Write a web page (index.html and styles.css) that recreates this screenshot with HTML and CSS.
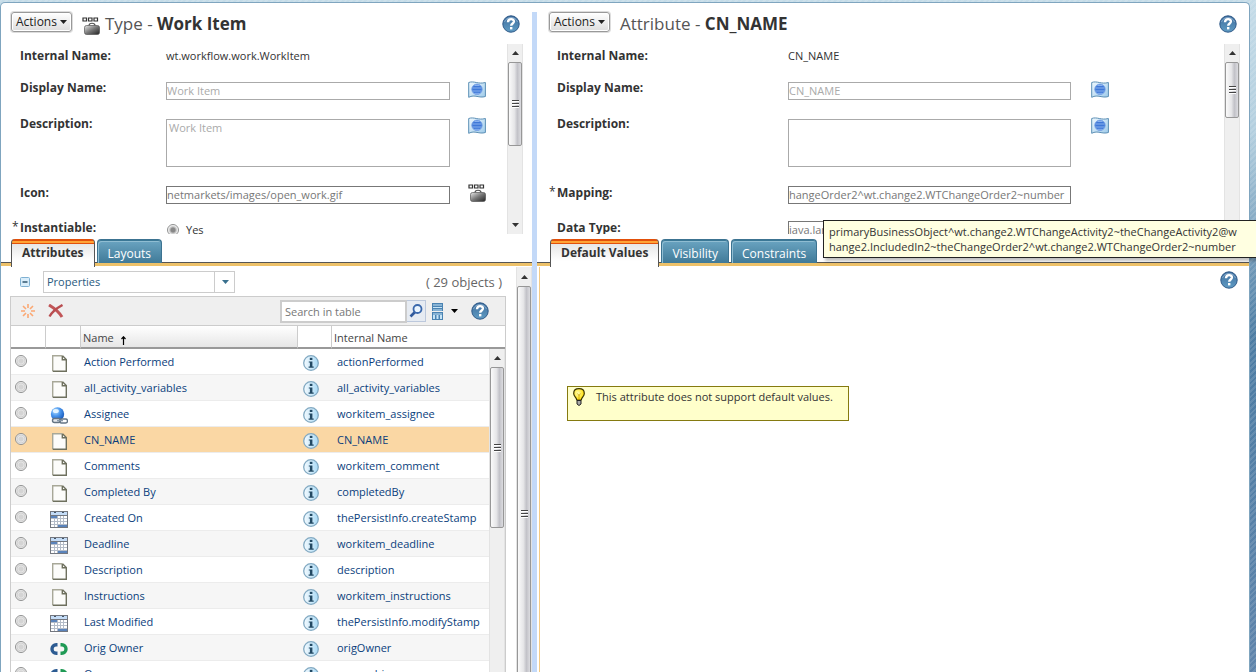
FILE: index.html
```html
<!DOCTYPE html>
<html lang="en">
<head>
<meta charset="utf-8">
<title>Type and Attribute Management</title>
<link rel="stylesheet" href="styles.css">
</head>
<body>
<svg class="defs" width="0" height="0" aria-hidden="true">
  <defs>
    <linearGradient id="g-help" x1="0" y1="0" x2="0" y2="1"><stop offset="0" stop-color="#3f6d9c"/><stop offset="1" stop-color="#5f9cc4"/></linearGradient>
    <linearGradient id="g-flag" x1="0" y1="0" x2="1" y2="1"><stop offset="0" stop-color="#eef8fe"/><stop offset="1" stop-color="#9fcbea"/></linearGradient>
    <linearGradient id="g-case" x1="0" y1="0" x2="1" y2="1"><stop offset="0" stop-color="#e8e8e8"/><stop offset=".5" stop-color="#777"/><stop offset="1" stop-color="#222"/></linearGradient>
    <linearGradient id="g-info" x1="0" y1="0" x2="1" y2="0"><stop offset="0" stop-color="#f5fbff"/><stop offset="1" stop-color="#a9daf6"/></linearGradient>
    <radialGradient id="g-globe" cx=".35" cy=".3" r=".7"><stop offset="0" stop-color="#b8e0ff"/><stop offset=".5" stop-color="#4a97ee"/><stop offset="1" stop-color="#1d5fc0"/></radialGradient>
    <radialGradient id="g-bulb" cx=".4" cy=".4" r=".6"><stop offset="0" stop-color="#ffffb0"/><stop offset="1" stop-color="#ffdc00"/></radialGradient>
  </defs>
  <symbol id="i-help" viewBox="0 0 18 18"><circle cx="9" cy="9" r="8.2" fill="url(#g-help)" stroke="#2f5a89"/><path d="M2.500 7a7 7 0 0 1 13 0" fill="none" stroke="#83a9cb"/><path d="M6 7.2C6.2 3.200 12.200 3.300 11.900 6.700C11.700 8.500 9.200 8.500 9.200 10.800" fill="none" stroke="#fff" stroke-width="2.400"/><rect x="8" y="12" width="2.400" height="2.400" fill="#fff"/></symbol>
  <symbol id="i-flag" viewBox="0 0 18 17"><path d="M.7 1.500C6-.5 10 3.500 17.400 1.500V15.500C11 17.500 7 13 .7 16.300Z" fill="url(#g-flag)" stroke="#5b8fb5"/><circle cx="9" cy="8.300" r="5.200" fill="#3f78d8" stroke="#7fa8e8"/><path d="M5 7H13M5 10H13M6.500 12.300H11.500M6.500 4.500H11.500" stroke="#9cc0f5" stroke-width=".8"/></symbol>
  <symbol id="i-work" viewBox="0 0 18 18"><path d="M1 1h3.500v3H1zM6.500 1H10v3H6.500zM12 1h3.500v3H12z" fill="#fff" stroke="#333" stroke-width="1.200"/><path d="M7 8.500C7 5.500 13 5.500 13 8.500" fill="none" stroke="#555" stroke-width="1.200"/><rect x="2.500" y="8.500" width="15" height="9" rx="2" fill="url(#g-case)" stroke="#555" stroke-width=".7"/></symbol>
  <symbol id="i-page" viewBox="0 0 15 17"><path d="M.7.7H10.500L14.300 4.500V16.300H.7Z" fill="#fcfcfa"/><path d="M.7 16V.7H10.500" fill="none" stroke="#a8a898" stroke-width="1.400"/><path d="M10.500.7L14.300 4.500V16.300H.7M10.300 1V4.800H14" fill="none" stroke="#6e705e" stroke-width="1.400"/></symbol>
  <symbol id="i-cal" viewBox="0 0 18 17"><rect width="18" height="17" fill="#73777f"/><rect x="1" y="1" width="16" height="3" fill="#c4dcf7"/><path d="M4 1.500h2M12 1.500h2" stroke="#456"/><path d="M1 5h16v11H1z" fill="#b4bcc8"/><path d="M8 5h2v2H8zM11 5h2v2h-2zM14 5h3v2h-3zM1 8h3v2H1zM5 8h2v2H5zM8 8h2v2H8zM11 8h2v2h-2zM14 8h3v2h-3zM1 11h3v2H1zM5 11h2v2H5zM8 11h2v2H8zM11 11h2v2h-2zM14 11h3v2h-3zM1 14h3v2H1zM5 14h2v2H5z" fill="#fff"/><path d="M1 5h6v2H1zM8 14h9v2H8z" fill="#5a83bb"/></symbol>
  <symbol id="i-globe" viewBox="0 0 18 17"><circle cx="7.500" cy="7" r="6.700" fill="url(#g-globe)"/><ellipse cx="5.800" cy="4" rx="3" ry="2" fill="#e3f4ff"/><rect x="2.500" y="11.500" width="8" height="4" rx="2" fill="#e5e9ee" stroke="#647484" stroke-width="1.400"/><rect x="9.500" y="12" width="8" height="4" rx="2" fill="none" stroke="#647484" stroke-width="1.400"/><path d="M7 13.600h6" stroke="#8898a8" stroke-width="1.400"/></symbol>
  <symbol id="i-owner" viewBox="0 0 18 12"><path d="M7.500 1.800H6.200A4 4 0 0 0 6.200 10.200H7.500" fill="none" stroke="#2c5b92" stroke-width="3.400"/><path d="M10.500 1.800H11.800A4 4 0 0 1 11.800 10.200H10.500" fill="none" stroke="#1f9a55" stroke-width="3.400"/></symbol>
  <symbol id="i-info" viewBox="0 0 16 16"><circle cx="8" cy="8" r="7.300" fill="url(#g-info)" stroke="#82a9c2" stroke-width="1.300"/><rect x="6.800" y="2.800" width="2.600" height="2.200" fill="#234a64"/><path d="M5.800 6.500H9.400V11.500H10.700V12.700H5.600V11.500H6.900V7.600H5.800Z" fill="#234a64"/></symbol>
  <symbol id="i-up" viewBox="0 0 7 4"><path d="M0 4L3.500 0L7 4Z" fill="#333"/></symbol>
  <symbol id="i-down" viewBox="0 0 7 4"><path d="M0 0L3.500 4L7 0Z" fill="currentColor"/></symbol>
</svg>

<main class="frame">
  <section class="pane pane-type">
    <header class="pane-head">
      <button class="actions" type="button">Actions<svg width="7" height="4"><use href="#i-down"/></svg></button>
      <svg class="head-icon" width="18" height="18"><use href="#i-work"/></svg>
      <h1>Type - <b>Work Item</b></h1>
      <button class="icon-btn help" type="button" aria-label="Help"><svg width="18" height="18"><use href="#i-help"/></svg></button>
    </header>
    <div class="scroller">
      <form class="fields fields-type">
        <span></span><b>Internal Name:</b><span class="plain">wt.workflow.work.WorkItem</span><span></span>
        <span></span><label for="t-name">Display Name:</label><input id="t-name" type="text" value="Work Item" disabled><button class="icon-btn flag" type="button" aria-label="Translate name"><svg width="18" height="17"><use href="#i-flag"/></svg></button>
        <span></span><label for="t-desc">Description:</label><textarea id="t-desc" disabled>Work Item</textarea><button class="icon-btn flag" type="button" aria-label="Translate description"><svg width="18" height="17"><use href="#i-flag"/></svg></button>
        <span></span><label for="t-icon">Icon:</label><input id="t-icon" class="strong" type="text" value="netmarkets/images/open_work.gif" readonly><svg class="type-icon" width="18" height="18"><use href="#i-work"/></svg>
        <span class="star">*</span><b>Instantiable:</b><label class="choice"><input type="radio" name="inst" checked>Yes</label><span></span>
      </form>
      <div class="scrollbar"><span class="arrow"><svg width="7" height="4"><use href="#i-up"/></svg></span><span class="thumb thumb-type"><i></i></span><span class="arrow end"><svg width="7" height="4"><use href="#i-down"/></svg></span></div>
    </div>
    <nav class="tabs"><button class="tab active" type="button">Attributes</button><button class="tab" type="button">Layouts</button></nav>
    <div class="lower">
      <div class="list">
        <div class="view-row">
          <button class="collapse" type="button" aria-label="Collapse"><svg width="10" height="10"><rect x=".5" y=".5" width="9" height="9" rx="1" fill="#d9edfa" stroke="#7fb0d2"/><path d="M2.500 5h5" stroke="#234a64" stroke-width="1.400"/></svg></button>
          <span class="select"><select aria-label="View"><option>Properties</option></select><span class="select-arrow"><svg width="7" height="4"><use href="#i-down"/></svg></span></span>
          <span class="count">( 29 objects )</span>
        </div>
        <div class="grid-box">
          <div class="toolbar">
            <button class="icon-btn" type="button" aria-label="New"><svg width="14" height="14" viewBox="0 0 14 14"><path d="M7 0v4M7 10v4M0 7h4M10 7h4M2 2l3 3M9 9l3 3M12 2L9 5M5 9l-3 3" stroke="#fba873" stroke-width="1.600"/></svg></button>
            <button class="icon-btn" type="button" aria-label="Delete"><svg width="16" height="14" viewBox="0 0 16 14"><path d="M1 1C6 4 11 8 14 13" fill="none" stroke="#c15557" stroke-width="3"/><path d="M14.500 1C9 4 4 8 1.500 12.500" fill="none" stroke="#b94d50" stroke-width="2.400"/></svg></button>
            <div class="search"><input type="text" aria-label="Search in table" placeholder="Search in table"><button type="button" aria-label="Search"><svg width="14" height="14" viewBox="0 0 14 14"><path d="M6 8L1.500 12.500" stroke="#315a9c" stroke-width="2.600"/><circle cx="8.500" cy="5" r="4" fill="#eaf5ff" stroke="#3a68ac" stroke-width="1.800"/></svg></button></div>
            <button class="icon-btn views" type="button" aria-label="Table views"><svg width="11" height="17" viewBox="0 0 11 17"><path d="M0 0h11v8H0zM0 9h11v8H0z" fill="#4a83b2"/><path d="M1 2h9M1 4.500h9M1 7h9M1 11h9" stroke="#c6e4f6" stroke-width="1.200"/><path d="M2 12v4M5.500 12v4M9 12v4" stroke="#c6e4f6" stroke-width="2"/></svg><svg width="7" height="4"><use href="#i-down"/></svg></button>
            <button class="icon-btn" type="button" aria-label="Help"><svg width="18" height="18"><use href="#i-help"/></svg></button>
          </div>
          <table>
            <colgroup><col class="c-radio"><col class="c-icon"><col><col class="c-info"><col class="c-internal"></colgroup>
            <thead><tr><th></th><th></th><th class="sorted">Name <svg width="5" height="9" viewBox="0 0 5 9"><path d="M2.500 9V1M.5 3L2.500.8L4.500 3" fill="none" stroke="#000" stroke-width="1.200"/></svg></th><th></th><th>Internal Name</th></tr></thead>
            <tbody>
              <tr><td><input type="radio" name="row" aria-label="Action Performed"></td><td><svg width="15" height="17"><use href="#i-page"/></svg></td><td>Action Performed</td><td><svg width="16" height="16"><use href="#i-info"/></svg></td><td>actionPerformed</td></tr>
              <tr><td><input type="radio" name="row" aria-label="all_activity_variables"></td><td><svg width="15" height="17"><use href="#i-page"/></svg></td><td>all_activity_variables</td><td><svg width="16" height="16"><use href="#i-info"/></svg></td><td>all_activity_variables</td></tr>
              <tr><td><input type="radio" name="row" aria-label="Assignee"></td><td><svg width="18" height="17"><use href="#i-globe"/></svg></td><td>Assignee</td><td><svg width="16" height="16"><use href="#i-info"/></svg></td><td>workitem_assignee</td></tr>
              <tr class="selected"><td><input type="radio" name="row" aria-label="CN_NAME"></td><td><svg width="15" height="17"><use href="#i-page"/></svg></td><td>CN_NAME</td><td><svg width="16" height="16"><use href="#i-info"/></svg></td><td>CN_NAME</td></tr>
              <tr><td><input type="radio" name="row" aria-label="Comments"></td><td><svg width="15" height="17"><use href="#i-page"/></svg></td><td>Comments</td><td><svg width="16" height="16"><use href="#i-info"/></svg></td><td>workitem_comment</td></tr>
              <tr><td><input type="radio" name="row" aria-label="Completed By"></td><td><svg width="15" height="17"><use href="#i-page"/></svg></td><td>Completed By</td><td><svg width="16" height="16"><use href="#i-info"/></svg></td><td>completedBy</td></tr>
              <tr><td><input type="radio" name="row" aria-label="Created On"></td><td><svg width="18" height="17"><use href="#i-cal"/></svg></td><td>Created On</td><td><svg width="16" height="16"><use href="#i-info"/></svg></td><td>thePersistInfo.createStamp</td></tr>
              <tr><td><input type="radio" name="row" aria-label="Deadline"></td><td><svg width="18" height="17"><use href="#i-cal"/></svg></td><td>Deadline</td><td><svg width="16" height="16"><use href="#i-info"/></svg></td><td>workitem_deadline</td></tr>
              <tr><td><input type="radio" name="row" aria-label="Description"></td><td><svg width="15" height="17"><use href="#i-page"/></svg></td><td>Description</td><td><svg width="16" height="16"><use href="#i-info"/></svg></td><td>description</td></tr>
              <tr><td><input type="radio" name="row" aria-label="Instructions"></td><td><svg width="15" height="17"><use href="#i-page"/></svg></td><td>Instructions</td><td><svg width="16" height="16"><use href="#i-info"/></svg></td><td>workitem_instructions</td></tr>
              <tr><td><input type="radio" name="row" aria-label="Last Modified"></td><td><svg width="18" height="17"><use href="#i-cal"/></svg></td><td>Last Modified</td><td><svg width="16" height="16"><use href="#i-info"/></svg></td><td>thePersistInfo.modifyStamp</td></tr>
              <tr><td><input type="radio" name="row" aria-label="Orig Owner"></td><td><svg width="18" height="12"><use href="#i-owner"/></svg></td><td>Orig Owner</td><td><svg width="16" height="16"><use href="#i-info"/></svg></td><td>origOwner</td></tr>
              <tr><td><input type="radio" name="row" aria-label="Owner"></td><td><svg width="18" height="12"><use href="#i-owner"/></svg></td><td>Owner</td><td><svg width="16" height="16"><use href="#i-info"/></svg></td><td>ownership</td></tr>
            </tbody>
          </table>
          <div class="scrollbar table-bar"><span class="arrow"><svg width="7" height="4"><use href="#i-up"/></svg></span><span class="thumb thumb-table"><i></i></span></div>
        </div>
      </div>
      <div class="scrollbar"><span class="arrow"><svg width="7" height="4"><use href="#i-up"/></svg></span><span class="thumb thumb-list"><i></i></span></div>
    </div>
  </section>

  <div class="divider"></div>

  <section class="pane pane-attr">
    <header class="pane-head">
      <button class="actions" type="button">Actions<svg width="7" height="4"><use href="#i-down"/></svg></button>
      <h1>Attribute - <b>CN_NAME</b></h1>
      <button class="icon-btn help" type="button" aria-label="Help"><svg width="18" height="18"><use href="#i-help"/></svg></button>
    </header>
    <div class="scroller">
      <form class="fields fields-attr">
        <span></span><b>Internal Name:</b><span class="plain">CN_NAME</span><span></span>
        <span></span><label for="a-name">Display Name:</label><input id="a-name" type="text" value="CN_NAME" disabled><button class="icon-btn flag" type="button" aria-label="Translate name"><svg width="18" height="17"><use href="#i-flag"/></svg></button>
        <span></span><label for="a-desc">Description:</label><textarea id="a-desc" disabled></textarea><button class="icon-btn flag" type="button" aria-label="Translate description"><svg width="18" height="17"><use href="#i-flag"/></svg></button>
        <span class="star">*</span><label for="a-map">Mapping:</label><input id="a-map" class="strong" type="text" value="hangeOrder2^wt.change2.WTChangeOrder2~number" readonly><span></span>
        <span></span><label for="a-type">Data Type:</label><input id="a-type" class="strong" type="text" value="java.lang.String" readonly><span></span>
      </form>
      <div class="scrollbar"><span class="arrow"><svg width="7" height="4"><use href="#i-up"/></svg></span><span class="thumb thumb-attr"><i></i></span></div>
    </div>
    <nav class="tabs"><button class="tab active" type="button">Default Values</button><button class="tab" type="button">Visibility</button><button class="tab" type="button">Constraints</button></nav>
    <div class="values">
      <button class="icon-btn help" type="button" aria-label="Help"><svg width="18" height="18"><use href="#i-help"/></svg></button>
      <p class="notice"><svg width="12" height="18" viewBox="0 0 12 18"><path d="M6 .7C2.500.7.700 3 .7 5.500C.7 8.500 3.500 9 3.700 12H8.300C8.500 9 11.300 8.500 11.300 5.500C11.300 3 9.500.7 6 .7Z" fill="url(#g-bulb)" stroke="#3a3500" stroke-width="1.200"/><path d="M6 12V7M4.500 5.500L6 7.500L7.500 5.500" fill="none" stroke="#c8a000" stroke-width=".7"/><path d="M4 12.500h4v3.500L6 17.500L4 16Z" fill="#aaa" stroke="#222"/></svg>This attribute does not support default values.</p>
    </div>
  </section>
</main>

<div class="tooltip" role="tooltip">primaryBusinessObject^wt.change2.WTChangeActivity2~theChangeActivity2@w<br>hange2.IncludedIn2~theChangeOrder2^wt.change2.WTChangeOrder2~number</div>
</body>
</html>
```
FILE: styles.css
```css
* { box-sizing: border-box; }

html, body { height: 100%; }

body {
  margin: 0;
  padding: 2px 6px 0 0;
  overflow: hidden;
  position: relative;
  font: 11px/18px "Open Sans", "Noto Sans", sans-serif;
  color: #333;
  background:
    repeating-linear-gradient(135deg, rgba(255, 255, 255, .12) 0 2px, transparent 2px 4px),
    linear-gradient(#c5dce8, #b2cede 20%, #4c7ca3 50%, #5f84ab);
}

input, textarea, select, button { font: inherit; color: inherit; margin: 0; }
button { cursor: pointer; }
svg { display: block; flex: none; }
.defs { position: absolute; }

.frame {
  height: 100%;
  display: grid;
  grid-template-columns: minmax(0, 531fr) 5px minmax(0, 712fr);
  background: #fff;
  border: solid #7fa5bf;
  border-width: 1px 1px 0;
  border-radius: 5px 5px 0 0;
}

.divider { margin-top: 9px; background: #c3d9f8; }

.pane {
  min-width: 0;
  min-height: 0;
  display: grid;
  grid-template-rows: 41px 190px 33px minmax(0, 1fr);
}

.pane-head {
  display: flex;
  align-items: flex-start;
  padding: 9px 12px 0 10px;
}
.pane-attr .pane-head { padding-left: 12px; }

.actions {
  height: 20px;
  display: flex;
  align-items: center;
  gap: 3px;
  padding: 0 4px 1px;
  border: 1px solid #999;
  border-radius: 3px;
  background: linear-gradient(#fff, #ddd);
  box-shadow: inset 0 0 0 1px #fff, 0 0 0 1px #ddd;
  font-size: 12px;
  color: #222;
}
.head-icon { margin: 5px 5px 0 10px; }

h1 {
  margin: 0;
  font-size: 17px;
  line-height: 24px;
  font-weight: 400;
  color: #555;
  white-space: nowrap;
}
h1 b { color: #333; }
.pane-attr h1 { margin-left: 10px; }

.icon-btn { padding: 0; border: 0; background: none; }
.help { margin: 3px 0 0 auto; }

.scroller {
  display: flex;
  overflow: hidden;
  padding-right: 9px;
}

.fields {
  flex: 1;
  min-width: 0;
  display: grid;
  grid-template-rows: 32px 36px 69px 35px auto;
  align-items: start;
  padding: 3px 0 0 11px;
}
.fields-type { grid-template-columns: 8px 146px minmax(0, 1fr) 57px; }
.pane-attr .fields { padding-left: 12px; }
.fields-attr { grid-template-columns: 8px 231px minmax(0, 1fr) 153px; }
.fields > b, .fields > label:not(.choice) { font-size: 12px; font-weight: 700; }
.star { font-size: 12px; line-height: 16px; }
.plain { color: #333; }

.fields input[type="text"], .fields textarea {
  display: block;
  width: 100%;
  height: 18px;
  margin-top: 3px;
  padding: 0 0 1px;
  border: 1px solid #aaa;
  border-radius: 0;
  background: #fff;
  line-height: 16px;
  color: #aaa;
}
.fields textarea { height: 48px; margin-top: 4px; padding: 0 2px; resize: none; }
.fields input[type="text"].strong { margin-top: 2px; border-color: #777; color: #777; }
.flag { margin: 2px 0 0 18px; }
.fields-attr .flag { margin-left: 20px; }
.type-icon { margin-left: 18px; }

.choice { display: flex; align-items: center; gap: 7px; padding-top: 2px; }

input[type="radio"] {
  appearance: none;
  width: 12px;
  height: 12px;
  border: 1px solid #8e8f8f;
  border-radius: 50%;
  background: radial-gradient(circle, #d4d4d4 0 2px, #e6e6e6 3px, #ccc 4px, #fff 5px);
}
.choice input:checked { margin-left: 1px; background: radial-gradient(circle, #888 0 2px, #bbb 3px, #fff 5px); }

.scrollbar {
  flex: none;
  width: 16px;
  display: flex;
  flex-direction: column;
  background: #efefef;
  border: solid #e3e3e3;
  border-width: 0 1px;
}
.arrow {
  flex: none;
  height: 18px;
  display: flex;
  align-items: center;
  justify-content: center;
  color: #333;
}
.arrow.end { margin-top: auto; }
.thumb {
  flex: none;
  display: flex;
  align-items: center;
  justify-content: center;
  border: 1px solid #979797;
  border-radius: 2px;
  background: linear-gradient(90deg, #fafafa, #e6e6e8 45%, #c2c2c8 70%, #dcdce0);
}
.thumb i {
  width: 7px;
  height: 8px;
  background: repeating-linear-gradient(#444 0 1px, #fff 1px 2px, transparent 2px 3px);
}
.thumb-type { height: 84px; }
.thumb-attr { height: 56px; }
.thumb-list { height: 456px; }
.thumb-table { height: 161px; }
.lower > .scrollbar { padding-top: 1px; }

.tabs {
  display: flex;
  align-items: flex-end;
  gap: 2px;
  padding: 5px 0 0 10px;
  background: linear-gradient(#555, #555) 0 28px / 100% 1px no-repeat, linear-gradient(#edc169, #edc169) 0 100% / 100% 3px no-repeat;
  border-bottom: 1px solid #fff;
}
.pane-attr .tabs { padding-left: 13px; }
.tab {
  height: 24px;
  align-self: flex-start;
  padding: 4px 10px 0;
  border: 1px solid #3c7391;
  border-bottom: 0;
  border-radius: 4px 4px 0 0;
  background: linear-gradient(#6ba5c2, #407a98);
  box-shadow: inset 0 1px #3b7896, inset 1px 2px #8fbdd2;
  font-size: 12px;
  line-height: 18px;
  color: #fff;
}
.tab.active {
  height: 28px;
  padding-bottom: 4px;
  border-color: #555;
  border-top: 0;
  background: linear-gradient(#e2500a 0 2px, #ffa336 2px 4px, #e2500a 4px 5px, #e6e6e6 5px, #fff 22px);
  box-shadow: none;
  font-weight: 700;
  color: #333;
}

.lower { display: flex; overflow: hidden; }
.list { flex: 1; min-width: 0; padding: 4px 10px 0 9px; }
.view-row { display: flex; align-items: center; height: 22px; margin-bottom: 3px; padding: 0 4px 0 10px; }
.collapse { padding: 0; border: 0; background: none; }
.select { position: relative; width: 192px; height: 22px; margin-left: 13px; }
.select select {
  appearance: none;
  display: block;
  width: 100%;
  height: 22px;
  padding: 0 22px 0 3px;
  border: 1px solid #ccc;
  border-radius: 0;
  background: #fff;
  color: #2a5a80;
}
.select-arrow {
  position: absolute;
  top: 0;
  right: 0;
  bottom: 0;
  width: 21px;
  display: flex;
  align-items: center;
  justify-content: center;
  border-left: 1px solid #ccc;
  color: #39708e;
  pointer-events: none;
}
.count { margin-left: auto; font-size: 13px; color: #666; }

.grid-box { position: relative; border: 1px solid #ccc; }
.toolbar {
  display: flex;
  align-items: center;
  height: 29px;
  padding: 0 16px 0 10px;
  gap: 13px;
  background: #efefef;
  border-bottom: 1px solid #ccc;
}
.search { display: flex; margin-left: auto; }
.search input {
  width: 127px;
  height: 23px;
  padding: 1px 3px 0;
  border: 2px solid #ccc;
  border-radius: 0;
  background: #fff;
}
.search input::placeholder { color: #777; opacity: 1; }
.search button {
  width: 19px;
  height: 22px;
  padding: 0 2px;
  border: 1px solid #bcc8dc;
  border-left: 0;
  background: #e6ebf2;
}
.views { display: flex; align-items: center; gap: 8px; margin-left: -7px; color: #000; }

table { width: 100%; table-layout: fixed; border-collapse: separate; border-spacing: 0; }
.c-radio, .c-icon { width: 35px; }
.c-info { width: 34px; }
.c-internal { width: 173px; }
th {
  height: 23px;
  padding: 2px 2px 0;
  text-align: left;
  font-weight: 400;
  color: #444;
  border-right: 1px solid #ccc;
  border-bottom: 2px solid #999;
}
th:last-child { border-right: 0; }
th.sorted { background: linear-gradient(#fff, #e6e6e6); }
th svg { display: inline-block; margin-left: 4px; vertical-align: -3px; }
td {
  height: 26px;
  padding: 1px 0 0 3px;
  white-space: nowrap;
  color: #0a3e7c;
  border-bottom: 1px solid #ececec;
}
td input { display: block; margin-bottom: 3px; }
td:nth-child(1) { padding-left: 4px; }
td svg { margin: 0 auto; }
td:nth-child(2) { padding: 3px 9px 0 0; }
td:nth-child(4) { padding: 2px 8px 0 0; }
td:nth-child(5) { padding-left: 5px; }
tbody tr:nth-child(even) { background: #f6f6f6; }
tbody tr.selected { background: #fad7a4; }

.table-bar { position: absolute; top: 52px; right: 0; bottom: 0; }

.values {
  margin-left: 2px;
  padding: 4px 11px 0 27px;
  border-left: 1px solid #f2ca86;
}
.values .help { display: block; margin-top: 0; }
.notice {
  display: flex;
  gap: 11px;
  width: fit-content;
  min-height: 35px;
  margin: 97px 0 0;
  padding: 1px 15px 0 5px;
  border: 1px solid #857a10;
  background: #ffffcb;
}

.tooltip {
  position: absolute;
  left: 823px;
  top: 220px;
  padding: 3px 24px 3px 5px;
  border: 1px solid #222;
  background: #ffffe1;
  box-shadow: 2px 3px 3px rgba(0, 0, 0, .25);
  line-height: 15px;
  color: #333;
  white-space: nowrap;
}
```
